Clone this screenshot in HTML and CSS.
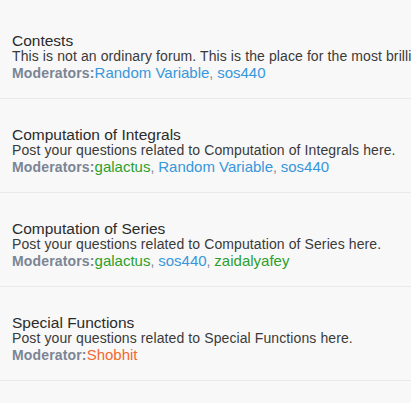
FILE: index.html
```html
<!DOCTYPE html>
<html lang="en">
<head>
<meta charset="utf-8">
<title>Forums</title>
<link rel="stylesheet" href="styles.css">
</head>
<body>
<div class="forum-list">
  <div class="forum">
    <div class="forum-title">Contests</div>
    <div class="forum-desc">This is not an ordinary forum. This is the place for the most brilliant problem solvers.</div>
    <div class="forum-mods"><span class="mods-label">Moderators:</span><a class="user blue">Random Variable</a>, <a class="user blue">sos440</a></div>
  </div>
  <div class="forum">
    <div class="forum-title">Computation of Integrals</div>
    <div class="forum-desc">Post your questions related to Computation of Integrals here.</div>
    <div class="forum-mods"><span class="mods-label">Moderators:</span><a class="user green">galactus</a>, <a class="user blue">Random Variable</a>, <a class="user blue">sos440</a></div>
  </div>
  <div class="forum">
    <div class="forum-title">Computation of Series</div>
    <div class="forum-desc">Post your questions related to Computation of Series here.</div>
    <div class="forum-mods"><span class="mods-label">Moderators:</span><a class="user green">galactus</a>, <a class="user blue">sos440</a>, <a class="user green">zaidalyafey</a></div>
  </div>
  <div class="forum">
    <div class="forum-title">Special Functions</div>
    <div class="forum-desc">Post your questions related to Special Functions here.</div>
    <div class="forum-mods"><span class="mods-label">Moderator:</span><a class="user orange">Shobhit</a></div>
  </div>
</div>
</body>
</html>
```

FILE: styles.css
```css
html, body {
  margin: 0;
  padding: 0;
  background: #f8f8f8;
  overflow: hidden;
}

body {
  font-family: "Liberation Sans", Arial, sans-serif;
  color: #333333;
}

.forum-list {
  padding-top: 4.5px;
}

.forum {
  padding: 28px 0 16px 12px;
  border-bottom: 1px solid #e9e9e9;
  white-space: nowrap;
  overflow: hidden;
}

.forum-title {
  font-size: 15.5px;
  line-height: 15px;
  color: #2b2b2b;
}

.forum-desc {
  font-size: 14px;
  line-height: 16px;
  letter-spacing: 0.1px;
  color: #3a3a3a;
}

.forum-mods {
  font-size: 14px;
  line-height: 17px;
  color: #7b8594;
}

.mods-label {
  font-weight: bold;
  letter-spacing: 0.15px;
  color: #7b8594;
}

.user {
  font-size: 15px;
  text-decoration: none;
}

.blue { color: #3797db; }
.green { color: #2c9f2c; }
.orange { color: #f2692b; }
```
